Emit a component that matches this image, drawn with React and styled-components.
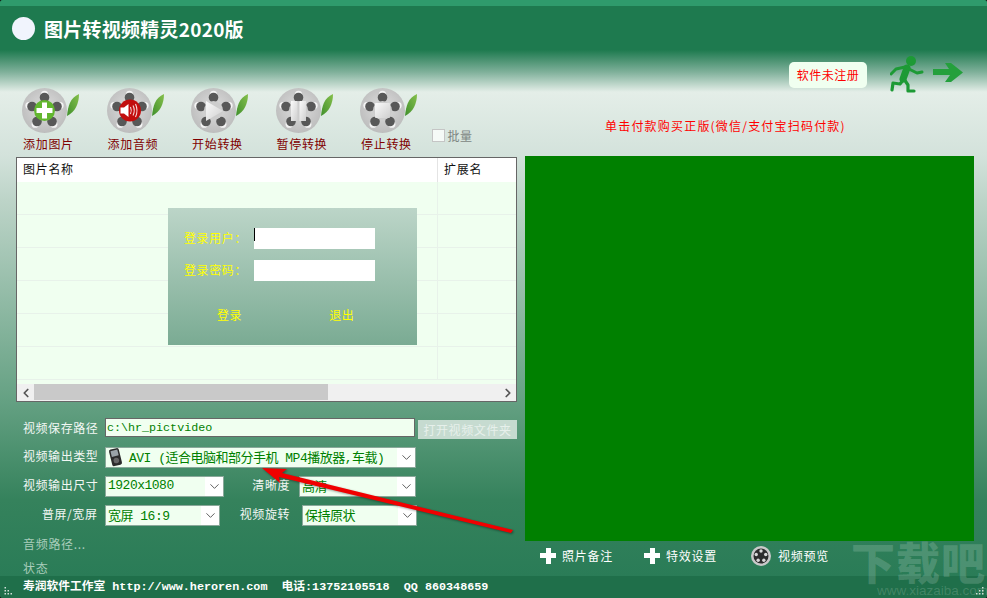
import React from 'react';
import styled, { createGlobalStyle } from 'styled-components';
import { ChevronDown, ChevronLeft, ChevronRight } from 'lucide-react';

const CJK = '"Noto Sans CJK SC", sans-serif';
const MONO = '"Liberation Mono", "Noto Sans CJK SC", monospace';

const BLOBS = [
  [0, -13],
  [-12.5, -4],
  [12.5, -4],
  [-7.5, 11],
  [7.5, 11],
];

// film reel with a different glyph in the hub
function Reel({ kind }) {
  return (
    <svg width="58" height="46" viewBox="0 0 58 46">
      <defs>
        <radialGradient id={`disc-${kind}`} cx="50%" cy="45%" r="55%">
          <stop offset="0%" stopColor="#dedede" />
          <stop offset="100%" stopColor="#bdbdbd" />
        </radialGradient>
        <linearGradient id={`leaf-${kind}`} x1="0" y1="1" x2="1" y2="0">
          <stop offset="0%" stopColor="#3f8f2c" />
          <stop offset="100%" stopColor="#86c04c" />
        </linearGradient>
        <linearGradient id={`hub-${kind}`} x1="0" y1="0" x2="1" y2="1">
          <stop offset="0%" stopColor="#fafafa" />
          <stop offset="100%" stopColor="#cfcfcf" />
        </linearGradient>
      </defs>
      <path d="M45 28C46 18 48 10 57 6C57 16 53 24 45 28Z" fill={`url(#leaf-${kind})`} />
      <circle cx="22.5" cy="22.5" r="22.5" fill={`url(#disc-${kind})`} />
      {BLOBS.map(([dx, dy]) => {
        const len = Math.hypot(dx, dy);
        const ox = (dx / len) * 3.2;
        const oy = (dy / len) * 3.2;
        return (
          <g key={`${dx}${dy}`}>
            <circle cx={22.5 + dx + ox} cy={22.5 + dy + oy} r="3.6" fill="#f4f4f4" />
            <circle cx={22.5 + dx} cy={22.5 + dy} r="4.8" fill="#585858" />
          </g>
        );
      })}
      {kind === 'add' && (
        <g>
          <circle cx="22.5" cy="22.5" r="10.5" fill="#62b62f" />
          <path d="M20 14.5h5v5.5h5.5v5h-5.5v5.5h-5v-5.5h-5.5v-5h5.5z" fill="#fff" />
        </g>
      )}
      {kind === 'audio' && (
        <g>
          <circle cx="23" cy="22.5" r="11" fill="#c20d0d" />
          <path d="M13.5 19.5h3.5l4.5-3.5v13l-4.5-3.5h-3.5z" fill="#fff" />
          <path d="M23.5 19q1.6 3.5 0 7M26 17.5q2.5 5 0 10M28.5 16q3 6.5 0 13" fill="none" stroke="#f6dada" strokeWidth="1.1" />
        </g>
      )}
      {kind !== 'add' && kind !== 'audio' && <circle cx="22.5" cy="22.5" r="9.5" fill="#cdcdcd" />}
      {kind === 'play' && <path d="M15 13L32 23L15 33Z" fill={`url(#hub-${kind})`} />}
      {kind === 'pause' && (
        <g fill={`url(#hub-${kind})`}>
          <rect x="15" y="13" width="6.5" height="20" />
          <rect x="23.5" y="13" width="6.5" height="20" />
        </g>
      )}
      {kind === 'stop' && <rect x="15" y="15" width="15" height="15" rx="1" fill={`url(#hub-${kind})`} />}
    </svg>
  );
}

const TOOLS = [
  { kind: 'add', label: '添加图片' },
  { kind: 'audio', label: '添加音频' },
  { kind: 'play', label: '开始转换' },
  { kind: 'pause', label: '暂停转换' },
  { kind: 'stop', label: '停止转换' },
];

function Select({ width, children, icon }) {
  return (
    <SelectBox $width={width}>
      <SelectValue>
        {icon}
        <SelectText>{children}</SelectText>
      </SelectValue>
      <SelectArrow>
        <ChevronDown size={15} strokeWidth={1.5} color="#555" />
      </SelectArrow>
    </SelectBox>
  );
}

// resize grip dots in the window's lower corners
function Grip({ flip }) {
  const dots = [
    [7, 1],
    [4, 4],
    [7, 4],
    [1, 7],
    [4, 7],
    [7, 7],
  ];
  return (
    <GripMark $flip={flip} width="10" height="10" viewBox="0 0 10 10">
      {dots.map(([x, y]) => (
        <rect key={`${x}-${y}`} x={x} y={y} width="1.5" height="1.5" fill="#cfe0d8" />
      ))}
    </GripMark>
  );
}

function App() {
  const rows = [0, 1, 2, 3, 4, 5];

  return (
    <Page>
      <GlobalStyle />
      <TopStripe />
      <TitleBar>
        <TitleDot />
        <Title>图片转视频精灵2020版</Title>
      </TitleBar>

      <Body>
        <LeftColumn>
          <Toolbar>
            {TOOLS.map((t) => (
              <ToolButton key={t.kind}>
                <Reel kind={t.kind} />
                <ToolLabel>{t.label}</ToolLabel>
              </ToolButton>
            ))}
            <BatchBox>
              <BatchCheck />
              批量
            </BatchBox>
          </Toolbar>

          <TableFrame>
            <TableHead>
              <NameCol>图片名称</NameCol>
              <ExtCol>扩展名</ExtCol>
            </TableHead>
            <TableRows>
              {rows.map((r) => (
                <TableRow key={r}>
                  <RowCell />
                </TableRow>
              ))}
            </TableRows>
            <ScrollBar>
              <ScrollEnd>
                <ChevronLeft size={14} strokeWidth={3} color="#555" />
              </ScrollEnd>
              <ScrollThumb />
              <ScrollEnd>
                <ChevronRight size={14} strokeWidth={3} color="#555" />
              </ScrollEnd>
            </ScrollBar>
            <LoginPanel>
              <LoginRow>
                <LoginLabel>登录用户：</LoginLabel>
                <LoginField>
                  <Caret />
                </LoginField>
              </LoginRow>
              <LoginRow>
                <LoginLabel>登录密码：</LoginLabel>
                <LoginField />
              </LoginRow>
              <LoginActions>
                <LoginAction>登录</LoginAction>
                <LoginAction>退出</LoginAction>
              </LoginActions>
            </LoginPanel>
          </TableFrame>

          <Form>
            <FormRow>
              <FieldLabel>视频保存路径</FieldLabel>
              <PathInput value="c:\hr_pictvideo" readOnly />
              <OpenFolder>打开视频文件夹</OpenFolder>
            </FormRow>
            <FormRow>
              <FieldLabel>视频输出类型</FieldLabel>
              <Select
                width={311}
                icon={
                  <svg width="16" height="20" viewBox="0 0 16 20">
                    <g transform="rotate(-14 8 10)">
                      <rect x="2.5" y="1.5" width="10" height="17" rx="2" fill="#2b2b2b" />
                      <rect x="4" y="3" width="7" height="6" fill="#9aa3a8" />
                      <circle cx="7.5" cy="13.5" r="2.8" fill="#666" />
                    </g>
                  </svg>
                }
              >
                AVI (适合电脑和部分手机 MP4播放器,车载)
              </Select>
            </FormRow>
            <FormRow>
              <FieldLabel>视频输出尺寸</FieldLabel>
              <Select width={119}>1920x1080</Select>
              <SideLabel $width={65} $inset={4}>清晰度</SideLabel>
              <Select width={117}>高清</Select>
            </FormRow>
            <FormRow>
              <FieldLabel $indent={26}>普屏/宽屏</FieldLabel>
              <Select width={115}>宽屏 16:9</Select>
              <SideLabel $width={72} $inset={7}>视频旋转</SideLabel>
              <Select width={115}>保持原状</Select>
            </FormRow>
            <MutedLine>音频路径...</MutedLine>
            <MutedLine>状态</MutedLine>
          </Form>
        </LeftColumn>

        <RightColumn>
          <RegisterRow>
            <RegisterBadge>软件未注册</RegisterBadge>
            <svg width="35" height="38" viewBox="0 0 35 38">
              <g fill="none" stroke="#1d9a35" strokeLinecap="round" strokeLinejoin="round">
                <path d="M17 13L13 24" strokeWidth="7" />
                <path d="M15 12L6 14L1 19" strokeWidth="3" />
                <path d="M17 13L27 18L32 17" strokeWidth="3" />
                <path d="M14 24L10 29L3 28L2 35" strokeWidth="3.2" />
                <path d="M14 24L18 30L18 36L24 36" strokeWidth="3.2" />
              </g>
              <circle cx="21" cy="6" r="5" fill="#1d9a35" />
            </svg>
            <svg width="30" height="19" viewBox="0 0 30 19">
              <path d="M0 6H16L12 0H18L30 9.5L18 19H12L17 12H0Z" fill="#24a03c" />
            </svg>
          </RegisterRow>
          <PayNotice>单击付款购买正版(微信/支付宝扫码付款)</PayNotice>
          <VideoPanel />
          <VideoActions>
            <VideoAction>
              <PlusMark />
              照片备注
            </VideoAction>
            <VideoAction>
              <PlusMark />
              特效设置
            </VideoAction>
            <VideoAction>
              <svg width="20" height="20" viewBox="0 0 20 20">
                <circle cx="10" cy="10" r="10" fill="#c9c9c9" />
                <circle cx="10" cy="10" r="7.5" fill="#2c2c2c" />
                {BLOBS.map(([dx, dy]) => (
                  <circle key={`${dx}${dy}`} cx={10 + dx * 0.38} cy={10 + dy * 0.38} r="1.7" fill="#d8d8d8" />
                ))}
              </svg>
              视频预览
            </VideoAction>
          </VideoActions>
        </RightColumn>
      </Body>

      <Footer>寿润软件工作室 http://www.heroren.com&nbsp; 电话:13752105518&nbsp; QQ 860348659</Footer>

      <Watermark>
        <WatermarkName>下载吧</WatermarkName>
        <WatermarkUrl>www.xiazaiba.com</WatermarkUrl>
      </Watermark>

      <Grip flip />
      <Grip />

      <RedArrow width="262" height="75" viewBox="0 0 262 75">
        <path d="M2 8L27 9L22 13L253 70L251 73L19 17L20 23Z" fill="#f00000" />
      </RedArrow>
    </Page>
  );
}

const GlobalStyle = createGlobalStyle`
  html, body {
    margin: 0;
    padding: 0;
    background: #111;
  }
`;

const Page = styled.div`
  position: relative;
  display: flex;
  flex-direction: column;
  width: 987px;
  height: 598px;
  overflow: hidden;
  border-radius: 3px;
  font-family: ${CJK};
  font-size: 12px;
  background: linear-gradient(
    180deg,
    #1e7a4f 0,
    #1e7a4f 50px,
    #7fb09a 72px,
    #e4eee8 92px,
    #d3e2db 156px,
    #bdd4c8 200px,
    #65a183 400px,
    #35825c 500px,
    #2a7c57 576px
  );
`;

const TopStripe = styled.div`
  height: 6px;
  flex: none;
  background: #2f9b6c;
`;

const TitleBar = styled.div`
  display: flex;
  align-items: center;
  gap: 9px;
  height: 48px;
  flex: none;
  padding: 0 0 3px 12px;
  box-sizing: border-box;
`;

const TitleDot = styled.div`
  width: 23px;
  height: 23px;
  border-radius: 50%;
  background: #f1f4fd;
`;

const Title = styled.h1`
  margin: 0;
  color: #fff;
  font-size: 19px;
  font-weight: 700;
  letter-spacing: 0.25px;
  line-height: 24px;
  font-family: ${CJK};
`;

const Body = styled.div`
  display: grid;
  grid-template-columns: 525px 449px;
  flex: 1;
  min-height: 0;
`;

const LeftColumn = styled.div`
  display: flex;
  flex-direction: column;
  padding-left: 16px;
`;

const Toolbar = styled.div`
  display: flex;
  align-items: flex-start;
  height: 69px;
  margin-top: 34px;
  flex: none;
  position: relative;
`;

const ToolButton = styled.div`
  display: flex;
  flex-direction: column;
  width: 84.5px;
  padding-left: 6px;
  box-sizing: border-box;
`;

const ToolLabel = styled.span`
  margin-top: 1px;
  padding-left: 1px;
  color: #800000;
  font-size: 12px;
  letter-spacing: 0.7px;
  line-height: 17px;
`;

const BatchBox = styled.label`
  display: flex;
  align-items: center;
  gap: 3px;
  margin-top: 39px;
  margin-left: -7px;
  color: #7d8582;
  font-size: 12px;
  letter-spacing: 0.4px;
`;

const BatchCheck = styled.span`
  width: 11px;
  height: 11px;
  border: 1px solid #c5c5c5;
  background: #f5faf7;
`;

const TableFrame = styled.div`
  position: relative;
  display: flex;
  flex-direction: column;
  width: 501px;
  height: 245px;
  box-sizing: border-box;
  border: 1px solid #666;
  background: #f0fff0;
  flex: none;
`;

const TableHead = styled.div`
  display: flex;
  height: 24px;
  flex: none;
  background: #fff;
  color: #111;
  line-height: 22px;
  font-size: 12px;
  letter-spacing: 0.7px;
`;

const NameCol = styled.div`
  width: 421px;
  box-sizing: border-box;
  padding-left: 6px;
  border-right: 1px solid #e4e4e4;
`;

const ExtCol = styled.div`
  padding-left: 6px;
`;

const TableRows = styled.div`
  flex: 1;
  min-height: 0;
  overflow: hidden;
`;

const TableRow = styled.div`
  height: 33px;
  box-sizing: border-box;
  border-bottom: 1px solid #e8f2ea;
`;

const RowCell = styled.div`
  width: 420px;
  height: 100%;
  border-right: 1px solid #e8f2ea;
`;

const ScrollBar = styled.div`
  display: flex;
  align-items: stretch;
  height: 17px;
  flex: none;
  background: #f0f0f0;
`;

const ScrollEnd = styled.div`
  display: flex;
  align-items: center;
  justify-content: center;
  width: 17px;
  flex: none;
  &:last-child {
    margin-left: auto;
  }
`;

const ScrollThumb = styled.div`
  width: 294px;
  margin-bottom: 1px;
  background: #c9c9c9;
`;

const LoginPanel = styled.div`
  position: absolute;
  left: 151px;
  top: 50px;
  display: flex;
  flex-direction: column;
  width: 249px;
  height: 137px;
  padding: 20px 0 0 16px;
  box-sizing: border-box;
  background: linear-gradient(180deg, #bcd5c8, #7aab93);
  color: #ffff00;
`;

const LoginRow = styled.div`
  display: flex;
  align-items: center;
  height: 21px;
  margin-bottom: 11px;
`;

const LoginLabel = styled.span`
  width: 70px;
  padding-bottom: 3px;
  font-size: 12px;
  letter-spacing: 0.6px;
`;

const LoginField = styled.div`
  position: relative;
  width: 121px;
  height: 21px;
  background: #fff;
`;

const Caret = styled.i`
  position: absolute;
  left: 0;
  top: 0;
  width: 1px;
  height: 13px;
  background: #000;
`;

const LoginActions = styled.div`
  display: flex;
  gap: 87px;
  margin-top: 14px;
  padding-left: 33px;
`;

const LoginAction = styled.span`
  font-size: 12px;
  letter-spacing: 0.6px;
`;

const Form = styled.div`
  display: flex;
  flex-direction: column;
  margin-top: 16px;
  color: #f2f7f4;
`;

const FormRow = styled.div`
  display: flex;
  align-items: center;
  gap: 5px;
  height: 22px;
  margin-bottom: 7px;
  &:first-child {
    align-items: flex-start;
    height: 20px;
    margin-bottom: 8px;
  }
`;

const FieldLabel = styled.span`
  width: 84px;
  flex: none;
  box-sizing: border-box;
  padding-left: ${(p) => p.$indent ?? 7}px;
  padding-bottom: 2px;
  font-size: 12px;
  letter-spacing: 0.55px;
  line-height: 20px;
  white-space: nowrap;
`;

const SideLabel = styled(FieldLabel)`
  width: ${(p) => p.$width}px;
  padding-left: 0;
  padding-right: ${(p) => p.$inset}px;
  text-align: right;
`;

const PathInput = styled.input`
  width: 310px;
  height: 19px;
  box-sizing: border-box;
  padding: 0 1px;
  border: 1px solid #666;
  background: #f0fff0;
  color: #008000;
  font-family: ${MONO};
  font-size: 11.7px;
  outline: none;
`;

const OpenFolder = styled.div`
  width: 99px;
  height: 19px;
  margin: 2px 0 0 -2px;
  background: #c6dbd0;
  color: #e6f0eb;
  text-align: center;
  font-size: 12px;
  letter-spacing: 0.6px;
  line-height: 19px;
`;

const SelectBox = styled.div`
  display: flex;
  align-items: stretch;
  width: ${(p) => p.$width}px;
  height: 21px;
  flex: none;
  box-sizing: border-box;
  border: 1px solid #8aa89a;
  background: #fff;
`;

const SelectValue = styled.div`
  display: flex;
  align-items: center;
  gap: 5px;
  flex: 1;
  min-width: 0;
  padding: 0 2px;
  background: #f0fff0;
  color: #008000;
  white-space: pre;
  font-family: ${MONO};
  font-size: 13px;
  letter-spacing: -0.5px;
`;

const SelectText = styled.span`
  padding-bottom: 2px;
`;

const SelectArrow = styled.div`
  display: flex;
  align-items: center;
  justify-content: center;
  width: 18px;
  flex: none;
`;

const MutedLine = styled.div`
  height: 24px;
  padding-left: 7px;
  color: #a9cdbb;
  font-size: 12px;
  letter-spacing: 0.7px;
  line-height: 22px;
`;

const RightColumn = styled.div`
  display: flex;
  flex-direction: column;
`;

const RegisterRow = styled.div`
  display: flex;
  align-items: flex-start;
  height: 38px;
  margin-top: 1px;
  flex: none;
  padding-left: 264px;
  & > svg:nth-child(2) {
    margin-left: 23px;
  }
  & > svg:nth-child(3) {
    margin: 8px 0 0 8px;
  }
`;

const RegisterBadge = styled.div`
  width: 78px;
  height: 26px;
  margin-top: 7px;
  border-radius: 5px;
  background: #f0fff0;
  color: #f00;
  text-align: center;
  font-size: 12px;
  letter-spacing: 0.5px;
  line-height: 26px;
`;

const PayNotice = styled.div`
  height: 63px;
  flex: none;
  padding: 24px 0 0 80px;
  box-sizing: border-box;
  color: #f00;
  font-size: 12px;
  letter-spacing: 1.2px;
  line-height: 18px;
`;

const VideoPanel = styled.div`
  height: 385px;
  flex: none;
  background: #008000;
`;

const VideoActions = styled.div`
  display: flex;
  align-items: center;
  height: 29px;
  padding-left: 15px;
  gap: 31px;
`;

const VideoAction = styled.div`
  display: flex;
  align-items: center;
  gap: 6px;
  color: #fff;
  font-size: 12px;
  letter-spacing: 0.75px;
  &:last-child {
    gap: 7px;
    margin-left: 3px;
  }
`;

const PlusMark = styled.span`
  position: relative;
  width: 16px;
  height: 16px;
  background:
    linear-gradient(#fff, #fff) center / 16px 5px no-repeat,
    linear-gradient(#fff, #fff) center / 5px 16px no-repeat;
`;

const Footer = styled.div`
  height: 22px;
  flex: none;
  padding-left: 23px;
  background: #1f6f4a;
  color: #fff;
  font-family: ${MONO};
  font-size: 11.75px;
  font-weight: 700;
  white-space: pre;
  line-height: 23px;
`;

const Watermark = styled.div`
  position: absolute;
  left: 851px;
  top: 540px;
  display: flex;
  flex-direction: column;
  width: 136px;
  color: rgba(255, 255, 255, 0.16);
  pointer-events: none;
`;

const WatermarkName = styled.div`
  font-size: 44px;
  font-weight: 900;
  line-height: 43px;
  letter-spacing: 1px;
  white-space: nowrap;
`;

const WatermarkUrl = styled.div`
  padding-left: 26px;
  font-family: "Liberation Sans", sans-serif;
  font-size: 13.5px;
  line-height: 15px;
  white-space: nowrap;
`;

const GripMark = styled.svg`
  position: absolute;
  bottom: 2px;
  ${(p) => (p.$flip ? 'left: 3px; transform: scaleX(-1);' : 'right: 2px;')}
`;

const RedArrow = styled.svg`
  position: absolute;
  left: 260px;
  top: 460px;
  filter: drop-shadow(1px 1px 1px rgba(0, 0, 0, 0.4));
`;

export default App;
